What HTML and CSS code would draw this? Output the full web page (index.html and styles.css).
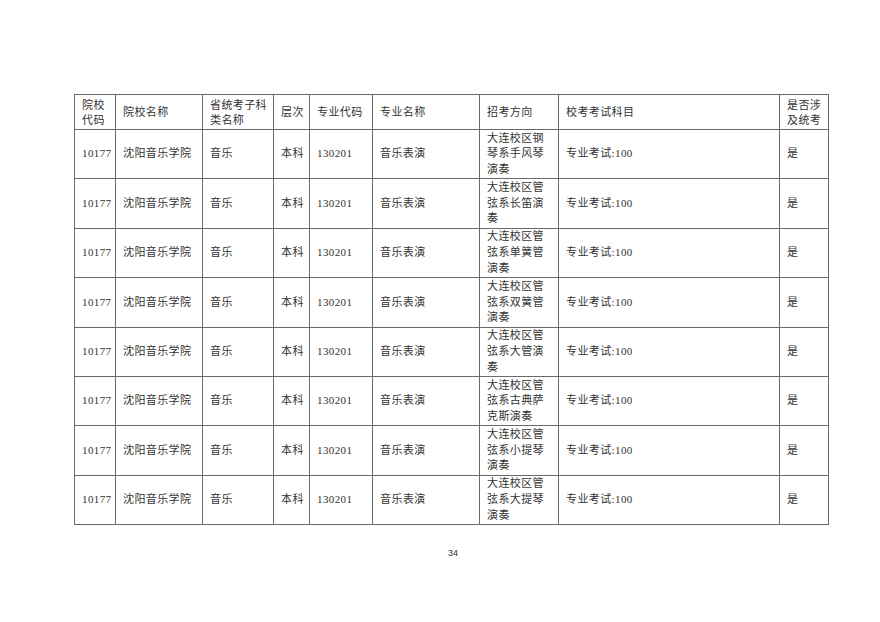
FILE: index.html
```html
<!DOCTYPE html>
<html lang="zh-CN">
<head>
<meta charset="utf-8">
<title>34</title>
<link rel="stylesheet" href="styles.css">
</head>
<body>
<div class="page">
  <table class="grid">
    <colgroup>
      <col class="c1"><col class="c2"><col class="c3"><col class="c4"><col class="c5"><col class="c6"><col class="c7"><col class="c8"><col class="c9">
    </colgroup>
    <thead>
      <tr class="head">
        <th>院校<br>代码</th>
        <th>院校名称</th>
        <th>省统考子科<br>类名称</th>
        <th>层次</th>
        <th>专业代码</th>
        <th>专业名称</th>
        <th>招考方向</th>
        <th>校考考试科目</th>
        <th>是否涉<br>及统考</th>
      </tr>
    </thead>
    <tbody>
      <tr><td>10177</td><td>沈阳音乐学院</td><td>音乐</td><td>本科</td><td>130201</td><td>音乐表演</td><td>大连校区钢<br>琴系手风琴<br>演奏</td><td>专业考试:100</td><td>是</td></tr>
      <tr><td>10177</td><td>沈阳音乐学院</td><td>音乐</td><td>本科</td><td>130201</td><td>音乐表演</td><td>大连校区管<br>弦系长笛演<br>奏</td><td>专业考试:100</td><td>是</td></tr>
      <tr><td>10177</td><td>沈阳音乐学院</td><td>音乐</td><td>本科</td><td>130201</td><td>音乐表演</td><td>大连校区管<br>弦系单簧管<br>演奏</td><td>专业考试:100</td><td>是</td></tr>
      <tr><td>10177</td><td>沈阳音乐学院</td><td>音乐</td><td>本科</td><td>130201</td><td>音乐表演</td><td>大连校区管<br>弦系双簧管<br>演奏</td><td>专业考试:100</td><td>是</td></tr>
      <tr><td>10177</td><td>沈阳音乐学院</td><td>音乐</td><td>本科</td><td>130201</td><td>音乐表演</td><td>大连校区管<br>弦系大管演<br>奏</td><td>专业考试:100</td><td>是</td></tr>
      <tr><td>10177</td><td>沈阳音乐学院</td><td>音乐</td><td>本科</td><td>130201</td><td>音乐表演</td><td>大连校区管<br>弦系古典萨<br>克斯演奏</td><td>专业考试:100</td><td>是</td></tr>
      <tr><td>10177</td><td>沈阳音乐学院</td><td>音乐</td><td>本科</td><td>130201</td><td>音乐表演</td><td>大连校区管<br>弦系小提琴<br>演奏</td><td>专业考试:100</td><td>是</td></tr>
      <tr><td>10177</td><td>沈阳音乐学院</td><td>音乐</td><td>本科</td><td>130201</td><td>音乐表演</td><td>大连校区管<br>弦系大提琴<br>演奏</td><td>专业考试:100</td><td>是</td></tr>
    </tbody>
  </table>
  <div class="pageno">34</div>
</div>
</body>
</html>
```

FILE: styles.css
```css
html, body {
  margin: 0;
  padding: 0;
  background: #ffffff;
}
.page {
  width: 880px;
  height: 622px;
  box-sizing: border-box;
  padding: 94px 0 0 74px;
  font-family: "Liberation Serif", "Noto Sans CJK SC", serif;
  color: #333;
}
.grid {
  border-collapse: collapse;
  table-layout: fixed;
  width: 754px;
}
.c1 { width: 41px; }
.c2 { width: 87px; }
.c3 { width: 71px; }
.c4 { width: 36px; }
.c5 { width: 63px; }
.c6 { width: 107px; }
.c7 { width: 79px; }
.c8 { width: 221px; }
.c9 { width: 49px; }
.grid th,
.grid td {
  border: 1px solid #6a6a6a;
  padding: 0 0 0 7px;
  text-align: left;
  vertical-align: middle;
  font-size: 11px;
  font-weight: normal;
  line-height: 15.7px;
  letter-spacing: 0.4px;
  white-space: nowrap;
  overflow: hidden;
}
.head th {
  height: 33px;
  line-height: 15px;
  padding-top: 1px;
}
.grid tbody td {
  height: 48.4px;
}
.pageno {
  width: 754px;
  text-align: center;
  margin-top: 23px;
  font-family: "Liberation Sans", sans-serif;
  font-size: 9px;
  color: #333;
  padding-left: 2px;
}
```
